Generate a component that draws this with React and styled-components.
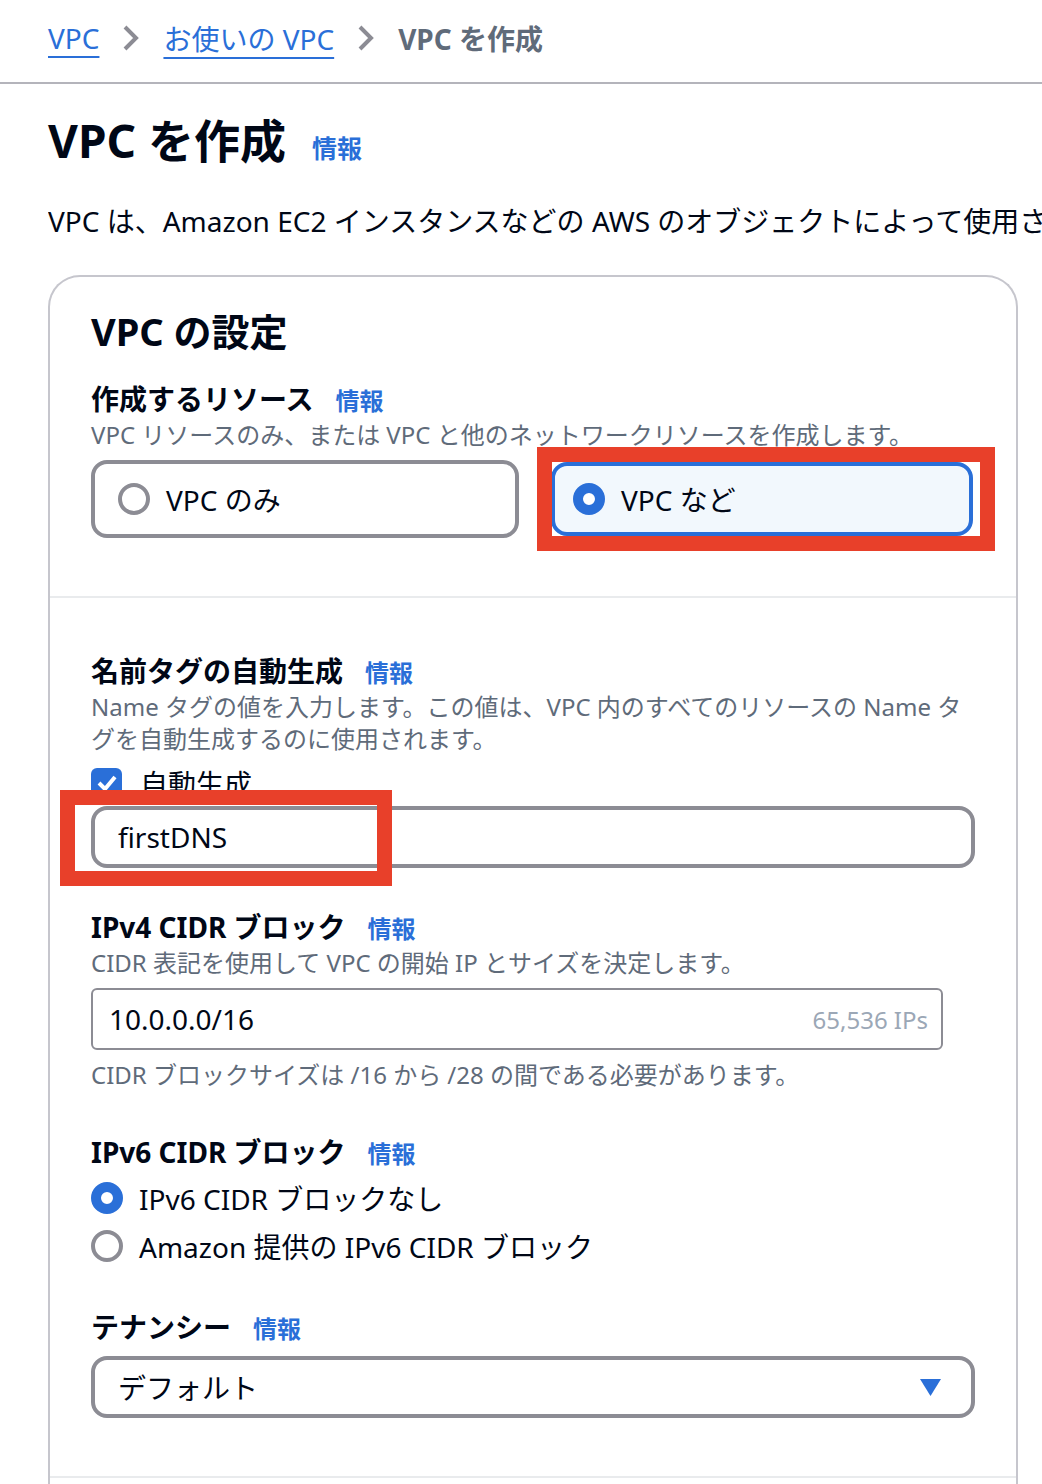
import React from 'react';
import styled, { createGlobalStyle } from 'styled-components';

const GlobalStyle = createGlobalStyle`
    html, body {
        margin: 0;
        padding: 0;
        background: #ffffff;
    }
    body {
        font-family: "Noto Sans", "Noto Sans CJK JP", sans-serif;
        color: #000716;
    }
`;

const Page = styled.div`
    width: 1042px;
    height: 1484px;
    overflow: hidden;
    background: #fff;
`;

const Breadcrumbs = styled.nav`
    display: flex;
    align-items: center;
    box-sizing: border-box;
    height: 84px;
    padding: 0 0 6px 48px;
    border-bottom: 2px solid #b4b4bb;
    font-size: 28px;
`;

const Crumb = styled.a`
    color: ${(props) => (props.current ? '#5f6b7a' : '#2a6fd8')};
    font-weight: ${(props) => (props.current ? 700 : 400)};
    text-decoration: ${(props) => (props.current ? 'none' : 'underline')};
    text-decoration-thickness: 2px;
    text-underline-offset: 7px;
    white-space: nowrap;
`;

const Chevron = styled.svg`
    width: 20px;
    height: 28px;
    margin: 0 22px 0 22px;
    flex: none;
`;

const Main = styled.div`
    padding: 0 0 0 48px;
`;

const TitleRow = styled.div`
    display: flex;
    align-items: baseline;
    gap: 26px;
    margin-top: 28px;
`;

const Title = styled.h1`
    margin: 0;
    font-size: 46px;
    line-height: 56px;
    font-weight: 700;
    color: #000716;
`;

const Info = styled.a`
    color: #2a6fd8;
    font-weight: 700;
    font-size: ${(props) => (props.large ? '25px' : '24px')};
    white-space: nowrap;
`;

const Lead = styled.p`
    margin: 33px 0 0;
    font-size: 28px;
    line-height: 40px;
    white-space: nowrap;
    overflow: hidden;
`;

const Card = styled.section`
    margin-top: 34px;
    width: 966px;
    border: 2px solid #c6c6cd;
    border-radius: 32px;
    border-bottom: none;
    height: 1300px;
`;

const Section = styled.div`
    padding: ${(props) => props.pad || '53px 42px 58px 41px'};
    border-top: ${(props) => (props.divided ? '2px solid #e9ebed' : 'none')};
`;

const CardTitle = styled.h2`
    margin: 0 0 24px;
    font-size: 38px;
    line-height: 48px;
    font-weight: 700;
`;

const Field = styled.div`
    margin-top: ${(props) => props.gap || 0}px;
`;

const LabelRow = styled.div`
    display: flex;
    align-items: baseline;
    gap: 22px;
`;

const Label = styled.span`
    font-size: 28px;
    line-height: 40px;
    font-weight: 700;
`;

const Hint = styled.div`
    font-size: 24px;
    line-height: 32px;
    color: #5f6b7a;
    margin-top: ${(props) => props.top || 0}px;
`;

const Tiles = styled.div`
    display: grid;
    grid-template-columns: 428px 422px;
    gap: 32px;
    margin-top: 9px;
`;

const TileWrap = styled.div`
    position: relative;
`;

const Tile = styled.div`
    box-sizing: border-box;
    height: ${(props) => (props.selected ? '74px' : '78px')};
    margin-top: ${(props) => (props.selected ? '2px' : '0')};
    display: flex;
    align-items: center;
    gap: 16px;
    padding-left: ${(props) => (props.selected ? '18px' : '23px')};
    border: 4px solid ${(props) => (props.selected ? '#2a6fd8' : '#8c8c94')};
    border-radius: 16px;
    background: ${(props) => (props.selected ? '#f2f8fd' : '#fff')};
    font-size: 28px;
`;

const Radio = styled.span`
    box-sizing: border-box;
    flex: none;
    width: 32px;
    height: 32px;
    border-radius: 50%;
    border: ${(props) => (props.checked ? '10px solid #2a6fd8' : '4px solid #8c8c94')};
    background: #fff;
`;

const Highlight = styled.div`
    position: absolute;
    box-sizing: border-box;
    border: 15px solid #e8402a;
    pointer-events: none;
`;

const CheckRow = styled.div`
    display: flex;
    align-items: center;
    gap: 18px;
    height: 36px;
    margin-top: 10px;
    font-size: 28px;
`;

const Checkbox = styled.span`
    display: flex;
    align-items: center;
    justify-content: center;
    width: 31px;
    height: 31px;
    border-radius: 6px;
    background: #2a6fd8;
`;

const InputWrap = styled.div`
    position: relative;
    margin-top: ${(props) => props.top || 0}px;
    width: ${(props) => props.width || 884}px;
`;

const Input = styled.div`
    box-sizing: border-box;
    height: 62px;
    display: flex;
    align-items: center;
    justify-content: space-between;
    padding: ${(props) => (props.thin ? '0 13px 0 16px' : '0 30px 0 23px')};
    border: ${(props) => (props.thin ? '2px' : '4px')} solid #8c8c94;
    border-radius: ${(props) => (props.thin ? '6px' : '16px')};
    font-size: 28px;
    background: #fff;
`;

const Suffix = styled.span`
    color: #9ba7b6;
    font-size: 24px;
`;

const RadioList = styled.div`
    margin-top: 2px;
`;

const RadioRow = styled.label`
    display: flex;
    align-items: center;
    gap: 16px;
    height: 48px;
    font-size: 28px;
`;

const Caret = styled.svg`
    width: 21px;
    height: 17px;
`;

const ChevronIcon = () => (
    <Chevron viewBox="0 0 20 28">
        <polyline points="4,3 15,14 4,25" fill="none" stroke="#8c8c94" strokeWidth="4" />
    </Chevron>
);

const FieldHeader = ({ children }) => (
    <LabelRow>
        <Label>{children}</Label>
        <Info>情報</Info>
    </LabelRow>
);

const App = () => (
    <Page>
        <GlobalStyle />
        <Breadcrumbs>
            <Crumb>VPC</Crumb>
            <ChevronIcon />
            <Crumb>お使いの VPC</Crumb>
            <ChevronIcon />
            <Crumb current>VPC を作成</Crumb>
        </Breadcrumbs>
        <Main>
            <TitleRow>
                <Title>VPC を作成</Title>
                <Info large>情報</Info>
            </TitleRow>
            <Lead>VPC は、Amazon EC2 インスタンスなどの AWS のオブジェクトによって使用されるプライベートな仮想ネットワークです。</Lead>
            <Card>
                <Section pad="30px 42px 58px 41px">
                    <CardTitle>VPC の設定</CardTitle>
                    <FieldHeader>作成するリソース</FieldHeader>
                    <Hint>VPC リソースのみ、または VPC と他のネットワークリソースを作成します。</Hint>
                    <Tiles>
                        <Tile>
                            <Radio />
                            VPC のみ
                        </Tile>
                        <TileWrap>
                            <Tile selected>
                                <Radio checked />
                                VPC など
                            </Tile>
                            <Highlight style={{ left: -14, top: -13, width: 458, height: 104 }} />
                        </TileWrap>
                    </Tiles>
                </Section>
                <Section divided>
                    <Field>
                        <FieldHeader>名前タグの自動生成</FieldHeader>
                        <Hint>
                            Name タグの値を入力します。この値は、VPC 内のすべてのリソースの Name タ
                            <br />
                            グを自動生成するのに使用されます。
                        </Hint>
                        <CheckRow>
                            <Checkbox>
                                <svg width="22" height="18" viewBox="0 0 22 18">
                                    <polyline points="3,9 9,15 19,3" fill="none" stroke="#fff" strokeWidth="4" />
                                </svg>
                            </Checkbox>
                            自動生成
                        </CheckRow>
                        <InputWrap top={5}>
                            <Input>firstDNS</Input>
                            <Highlight style={{ left: -31, top: -16, width: 332, height: 96 }} />
                        </InputWrap>
                    </Field>
                    <Field gap={39}>
                        <FieldHeader>IPv4 CIDR ブロック</FieldHeader>
                        <Hint>CIDR 表記を使用して VPC の開始 IP とサイズを決定します。</Hint>
                        <InputWrap top={9} width={852}>
                            <Input thin>
                                10.0.0.0/16
                                <Suffix>65,536 IPs</Suffix>
                            </Input>
                        </InputWrap>
                        <Hint top={9}>CIDR ブロックサイズは /16 から /28 の間である必要があります。</Hint>
                    </Field>
                    <Field gap={41}>
                        <FieldHeader>IPv6 CIDR ブロック</FieldHeader>
                        <RadioList>
                            <RadioRow>
                                <Radio checked />
                                IPv6 CIDR ブロックなし
                            </RadioRow>
                            <RadioRow>
                                <Radio />
                                Amazon 提供の IPv6 CIDR ブロック
                            </RadioRow>
                        </RadioList>
                    </Field>
                    <Field gap={37}>
                        <FieldHeader>テナンシー</FieldHeader>
                        <InputWrap top={9}>
                            <Input>
                                デフォルト
                                <Caret viewBox="0 0 21 17">
                                    <polygon points="0,0 21,0 10.5,17" fill="#2a6fd8" />
                                </Caret>
                            </Input>
                        </InputWrap>
                    </Field>
                </Section>
                <Section divided />
            </Card>
        </Main>
    </Page>
);

export default App;
